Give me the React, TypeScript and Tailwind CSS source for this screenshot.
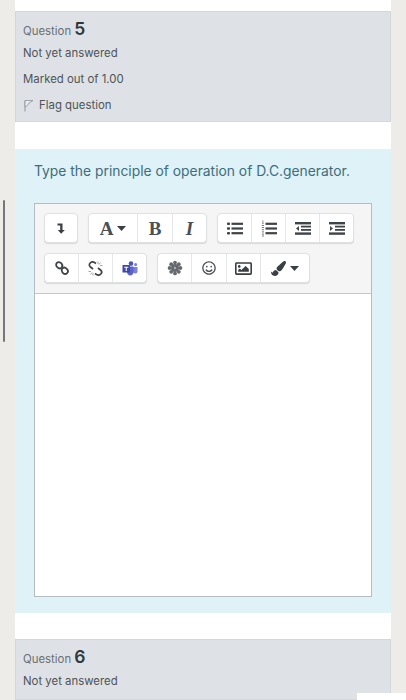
import React from 'react';
import { FaPaintBrush, FaRegImage, FaRegSmile } from 'react-icons/fa';

const dark = '#3f4449';

const Caret = () => (
  <svg width="9" height="5" viewBox="0 0 9 5" className="shrink-0">
    <path d="M0 0h9L4.5 5z" fill="#3a3f44" />
  </svg>
);

const Flag = () => (
  <svg width="11" height="13" viewBox="0 0 11 13" fill="none" stroke="#8f9498" strokeWidth="1">
    <path d="M2 1.5v11" />
    <path d="M2 1.5h8L6 4 4.5 6.5 2 8z" fill="#e9ebed" strokeWidth="0.8" />
  </svg>
);

const ReturnArrow = () => (
  <svg width="8" height="11" viewBox="0 0 8 11" fill="#3a3f44">
    <path d="M0.5 0.5h5v6.5H7.8L4.2 10.8 0.8 7H3.2V2.5H0.5z" />
  </svg>
);

const Snowflake = () => (
  <svg width="16" height="16" viewBox="0 0 16 16" fill="#64696e">
    <circle cx="8" cy="8" r="4" />
    <circle cx="8" cy="2.6" r="1.9" />
    <circle cx="8" cy="13.4" r="1.9" />
    <circle cx="2.6" cy="8" r="1.9" />
    <circle cx="13.4" cy="8" r="1.9" />
    <circle cx="4.2" cy="4.2" r="1.9" />
    <circle cx="11.8" cy="4.2" r="1.9" />
    <circle cx="4.2" cy="11.8" r="1.9" />
    <circle cx="11.8" cy="11.8" r="1.9" />
    <circle cx="8" cy="8" r="1.2" fill="#a9adb1" />
  </svg>
);

const LinkIcon = () => (
  <svg width="14" height="14" viewBox="0 0 14 14" fill="none" stroke={dark} strokeWidth="1.8">
    <ellipse cx="4.2" cy="4.2" rx="3.3" ry="2.8" transform="rotate(45 4.2 4.2)" />
    <ellipse cx="9.8" cy="9.8" rx="3.3" ry="2.8" transform="rotate(45 9.8 9.8)" />
  </svg>
);

const UnlinkIcon = () => (
  <svg width="15" height="15" viewBox="0 0 15 15" fill="none">
    <path d="M8 2.5 6.5 1.5C5 .6 3 1 2 2.2 1 3.5 1.2 5 2.5 6L5 8" stroke={dark} strokeWidth="1.7" />
    <path d="M7 12.5 8.5 13.5C10 14.4 12 14 13 12.8 14 11.5 13.8 10 12.5 9L10 7" stroke={dark} strokeWidth="1.7" />
    <path d="M10 .5V3M12.5 1.5 11 3.5M14.5 4.5H12M.5 10.5H3M2.5 13.5 4 11.5M5 14.5V12" stroke="#a3a7ab" strokeWidth="1" />
  </svg>
);

const TeamsIcon = () => (
  <svg width="16" height="15" viewBox="0 0 16 15" fill="#4b53bc">
    <circle cx="9" cy="2.6" r="2.3" />
    <circle cx="13.6" cy="3.6" r="1.6" fill="#7b83d6" />
    <path d="M11 6h4.5v4.2c0 1.4-1 2.3-2.2 2.3-.8 0-1.6-.4-2.3-1z" fill="#7b83d6" />
    <path d="M5 5.5h6.5V11c0 2-1.4 3.4-3.2 3.4S5 13 5 11z" fill="#5b63c8" />
    <rect x="0.5" y="4" width="7.5" height="7.5" rx="0.6" fill="#3f47ad" />
    <path d="M2.2 5.8h4.1v1H4.8v3.3H3.7V6.8H2.2z" fill="#fff" />
  </svg>
);

const ListUl = () => (
  <svg width="16" height="13" viewBox="0 0 16 13" fill={dark}>
    <rect x="0" y="0.5" width="3" height="2.6" rx="0.8" />
    <rect x="0" y="5.2" width="3" height="2.6" rx="0.8" />
    <rect x="0" y="9.9" width="3" height="2.6" rx="0.8" />
    <rect x="4.5" y="0.7" width="11.5" height="2.2" />
    <rect x="4.5" y="5.4" width="11.5" height="2.2" />
    <rect x="4.5" y="10.1" width="11.5" height="2.2" />
  </svg>
);

const ListOl = () => (
  <svg width="16" height="17" viewBox="0 0 16 17" fill={dark}>
    <rect x="1.2" y="0.5" width="1.2" height="1.2" fill="#777b80" />
    <rect x="1" y="2.5" width="1.8" height="1.2" fill="#777b80" />
    <rect x="0.8" y="5" width="2.2" height="1" fill="#777b80" />
    <rect x="0.8" y="7" width="2.2" height="1" fill="#777b80" />
    <rect x="0.8" y="9.2" width="2.2" height="1" fill="#777b80" />
    <rect x="0.8" y="11.4" width="2.2" height="1" fill="#777b80" />
    <rect x="0.8" y="13.6" width="2.2" height="1" fill="#777b80" />
    <rect x="1" y="15.5" width="2" height="1" fill="#777b80" />
    <rect x="4.5" y="2.7" width="11.5" height="2.2" />
    <rect x="4.5" y="7.4" width="11.5" height="2.2" />
    <rect x="4.5" y="12.1" width="11.5" height="2.2" />
  </svg>
);

const Outdent = () => (
  <svg width="16" height="13" viewBox="0 0 16 13" fill={dark}>
    <rect x="0" y="0" width="16" height="2.4" />
    <rect x="6" y="3.7" width="10" height="1.8" />
    <rect x="6" y="7" width="10" height="1.8" />
    <rect x="0" y="10.4" width="16" height="2.4" />
    <path d="M4 4v5L1 6.5z" />
  </svg>
);

const Indent = () => (
  <svg width="16" height="13" viewBox="0 0 16 13" fill={dark}>
    <rect x="0" y="0" width="16" height="2.4" />
    <rect x="6" y="3.7" width="10" height="1.8" />
    <rect x="6" y="7" width="10" height="1.8" />
    <rect x="0" y="10.4" width="16" height="2.4" />
    <path d="M1 4v5l3-2.5z" />
  </svg>
);

const Btn = ({ w, last, children }: { w: string; last?: boolean; children: React.ReactNode }) => (
  <div className={`${w} h-full flex items-center justify-center gap-1 ${last ? '' : 'border-r border-[#e6e7e8]'}`}>
    {children}
  </div>
);

const Group = ({ children }: { children: React.ReactNode }) => (
  <div className="h-[30px] flex bg-white rounded-[4px] border border-[#dfe1e3] shadow-[0_1px_1px_rgba(0,0,0,0.12)]">
    {children}
  </div>
);

const PanelLine = ({ children }: { children: React.ReactNode }) => (
  <div className="text-[11.4px] leading-[16px] text-[#4f5357]">{children}</div>
);

const QuestionTitle = ({ n }: { n: number }) => (
  <div className="flex items-baseline gap-[3px] h-[20px] leading-[19px] text-[#6a6e72] text-[11.4px]">
    <span>Question</span>
    <span className="text-[17.5px] font-semibold text-[#33373b]">{n}</span>
  </div>
);

export default function App() {
  return (
    <div className="relative h-[700px] w-[406px] overflow-hidden bg-[#eeece9] font-['Inter','Liberation_Sans',sans-serif]">
      {/* scroll thumb */}
      <div className="absolute left-[3px] top-[200px] w-[2px] h-[142px] bg-[#77777a] rounded-full" />
      <div className="absolute left-[357px] top-[693px] w-[49px] h-[7px] bg-white" />

      <div className="ml-[15px] w-[376px] h-full bg-white flex flex-col">
        <div className="h-[11px] shrink-0" />

        <div className="h-[111px] shrink-0 bg-[#dee2e6] border border-[#d3d7db] pl-[7px] pt-[7px]">
          <QuestionTitle n={5} />
          <div className="mt-[6px] flex flex-col gap-[10px]">
            <PanelLine>Not yet answered</PanelLine>
            <PanelLine>Marked out of 1.00</PanelLine>
            <div className="flex items-center gap-[5px]">
              <Flag />
              <PanelLine>Flag question</PanelLine>
            </div>
          </div>
        </div>

        <div className="h-[27px] shrink-0" />

        <div className="h-[464px] shrink-0 bg-[#def2f8] pt-[13px] px-[19px]">
          <div className="h-[19px] leading-[19px] text-[13.85px] text-[#3f6d7c]">
            Type the principle of operation of D.C.generator.
          </div>
          <div className="mt-[22px] w-[338px] h-[394px] border border-[#b6bcc2] flex flex-col bg-white">
            <div className="h-[90px] shrink-0 bg-[#f5f5f5] border-b border-[#c4c8cc] pt-[9px] pl-[9px] flex flex-col gap-[10px]">
              <div className="flex gap-[10px]">
                <Group>
                  <Btn w="w-[32px]" last><ReturnArrow /></Btn>
                </Group>
                <Group>
                  <Btn w="w-[49px]">
                    <span className="font-['Liberation_Serif',serif] font-bold text-[19px] leading-none text-[#4a4f54]">A</span>
                    <Caret />
                  </Btn>
                  <Btn w="w-[35px]">
                    <span className="font-['Liberation_Serif',serif] font-bold text-[19px] leading-none text-[#4a4f54]">B</span>
                  </Btn>
                  <Btn w="w-[33px]" last>
                    <span className="font-['Liberation_Serif',serif] font-bold italic text-[19px] leading-none text-[#4a4f54]">I</span>
                  </Btn>
                </Group>
                <Group>
                  <Btn w="w-[34px]"><ListUl /></Btn>
                  <Btn w="w-[34px]"><ListOl /></Btn>
                  <Btn w="w-[34px]"><Outdent /></Btn>
                  <Btn w="w-[33px]" last><Indent /></Btn>
                </Group>
              </div>
              <div className="flex gap-[10px]">
                <Group>
                  <Btn w="w-[34px]"><LinkIcon /></Btn>
                  <Btn w="w-[34px]"><UnlinkIcon /></Btn>
                  <Btn w="w-[33px]" last><TeamsIcon /></Btn>
                </Group>
                <Group>
                  <Btn w="w-[34px]"><Snowflake /></Btn>
                  <Btn w="w-[35px]"><FaRegSmile size={14} color="#4a4f54" /></Btn>
                  <Btn w="w-[34px]"><FaRegImage size={17} color="#3a3f44" /></Btn>
                  <Btn w="w-[48px]" last>
                    <FaPaintBrush size={15} color="#3a3f44" />
                    <Caret />
                  </Btn>
                </Group>
              </div>
            </div>
            <div className="flex-1 bg-white" />
          </div>
        </div>

        <div className="h-[26px] shrink-0" />

        <div className="flex-1 bg-[#dee2e6] border border-[#d3d7db] pl-[7px] pt-[7px]">
          <QuestionTitle n={6} />
          <div className="mt-[6px]">
            <PanelLine>Not yet answered</PanelLine>
          </div>
        </div>
      </div>
    </div>
  );
}
